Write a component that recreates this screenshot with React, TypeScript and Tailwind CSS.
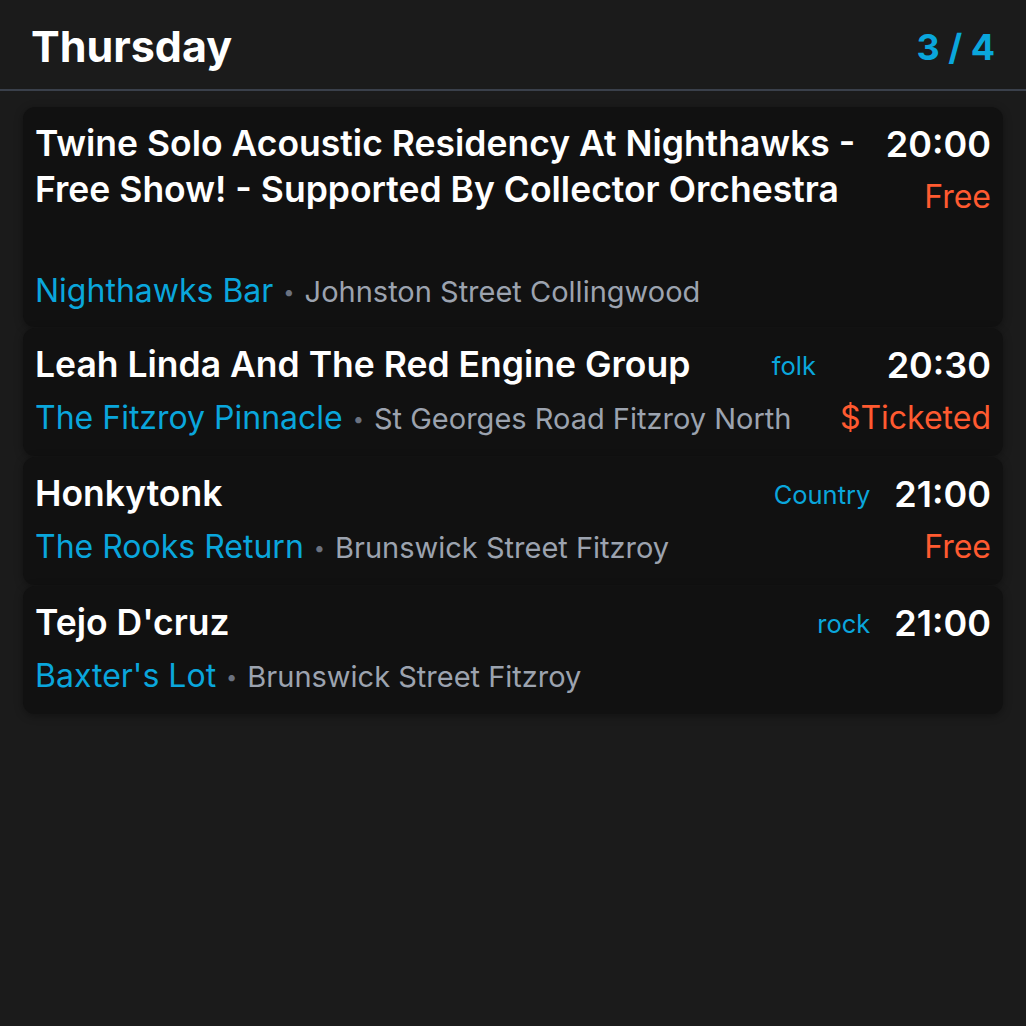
import React from "react";

type Gig = {
  title: string;
  genre?: string;
  time: string;
  price?: string;
  venue: string;
  address: string;
  tall?: boolean;
};

const gigs: Gig[] = [
  {
    title: "Twine Solo Acoustic Residency At Nighthawks - Free Show! - Supported By Collector Orchestra",
    time: "20:00",
    price: "Free",
    venue: "Nighthawks Bar",
    address: "Johnston Street Collingwood",
    tall: true,
  },
  {
    title: "Leah Linda And The Red Engine Group",
    genre: "folk",
    time: "20:30",
    price: "$Ticketed",
    venue: "The Fitzroy Pinnacle",
    address: "St Georges Road Fitzroy North",
  },
  {
    title: "Honkytonk",
    genre: "Country",
    time: "21:00",
    price: "Free",
    venue: "The Rooks Return",
    address: "Brunswick Street Fitzroy",
  },
  {
    title: "Tejo D'cruz",
    genre: "rock",
    time: "21:00",
    venue: "Baxter's Lot",
    address: "Brunswick Street Fitzroy",
  },
];

function Card({ gig }: { gig: Gig }) {
  return (
    <div
      className={
        "grid grid-cols-[1fr_auto_auto] gap-y-[10px] rounded-xl bg-[#111111] px-3 pt-[14px] shadow-[0_2px_8px_rgba(0,0,0,0.35)] " +
        (gig.tall ? "pb-[16px]" : "pb-[18px]")
      }
    >
      <div
        className={
          "col-start-1 row-start-1 text-[35.5px] font-semibold leading-[46px] text-white " +
          (gig.tall ? "row-span-2" : "")
        }
      >
        {gig.title}
      </div>
      {gig.genre ? (
        <div className="col-start-2 row-start-1 ml-6 self-start pt-[6px] text-[25.5px] leading-[36px] text-[#0aa6dc]">
          {gig.genre}
        </div>
      ) : null}
      <div className="col-start-3 row-start-1 ml-6 text-right text-[36px] font-semibold leading-[46px] text-white">
        {gig.time}
      </div>
      {gig.price ? (
        <div className="col-start-3 row-start-2 ml-6 h-[40px] text-right text-[32px] leading-[40px] text-[#ff5a30]">
          {gig.price}
        </div>
      ) : null}
      <div
        className={
          "col-start-1 flex h-[40px] items-baseline whitespace-nowrap overflow-visible " +
          (gig.tall ? "row-start-3 mt-[44px] col-span-3" : "row-start-2 col-span-2")
        }
      >
        <span className="text-[32px] leading-[40px] text-[#0aa6dc]">{gig.venue}</span>
        <span className="mx-[10px] text-[20px] leading-[20px] text-[#6b7280] relative top-[-3px]">•</span>
        <span className="text-[29px] leading-[36px] text-[#9ca3af]">{gig.address}</span>
      </div>
    </div>
  );
}

export default function App() {
  return (
    <div
      className="min-h-screen w-full bg-[#1b1b1b]"
      style={{ fontFamily: "Inter, 'Noto Sans', sans-serif" }}
    >
      <div className="flex h-[91px] items-center justify-between border-b-2 border-[#3a404b] pl-[31px] pr-[31px] pt-[4px]">
        <div className="text-[43px] font-bold leading-none text-white">Thursday</div>
        <div className="text-[36px] font-bold leading-none text-[#0aa6dc]">3 / 4</div>
      </div>
      <div className="flex flex-col gap-[1px] px-[23px] pt-[16px]">
        {gigs.map((g, i) => (
          <Card key={i} gig={g} />
        ))}
      </div>
    </div>
  );
}
